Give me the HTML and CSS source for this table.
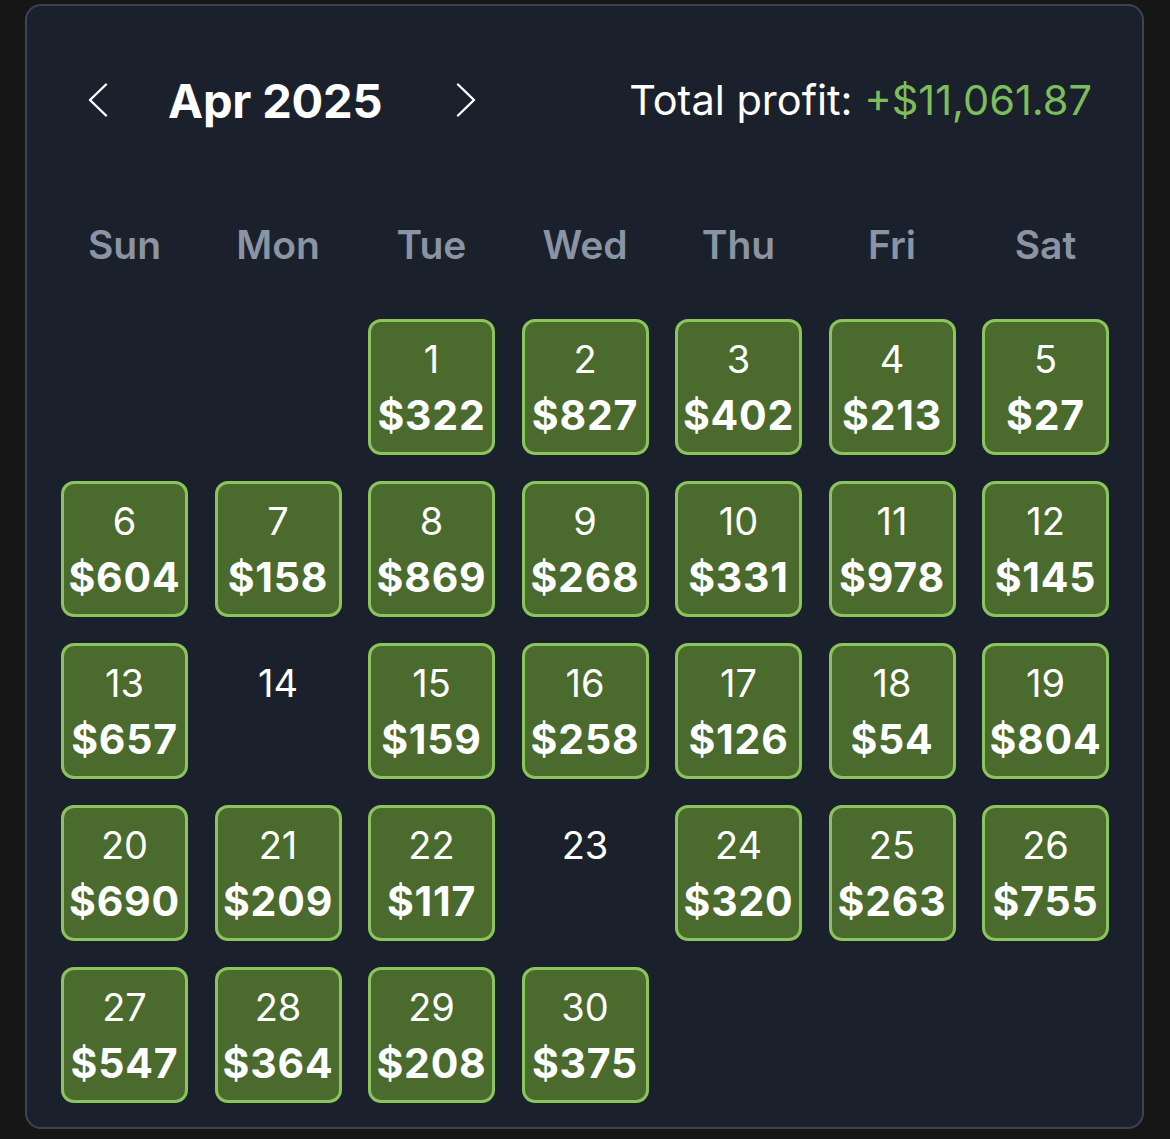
FILE: index.html
```html
<!DOCTYPE html>
<html lang="en">
<head>
<meta charset="utf-8">
<title>Profit calendar</title>
<link rel="stylesheet" href="styles.css">
</head>
<body>
<div class="card">
  <div class="header">
    <div class="nav">
      <svg class="chev chev-left" viewBox="0 0 20 34" width="20" height="34"><path d="M18 1.5 L2 17 L18 32.5" fill="none" stroke="#ffffff" stroke-width="2.4" stroke-linecap="round" stroke-linejoin="round"/></svg>
      <span class="month">Apr 2025</span>
      <svg class="chev chev-right" viewBox="0 0 20 34" width="20" height="34"><path d="M2 1.5 L18 17 L2 32.5" fill="none" stroke="#ffffff" stroke-width="2.4" stroke-linecap="round" stroke-linejoin="round"/></svg>
    </div>
    <div class="total">Total profit: <span class="pos">+$11,061.87</span></div>
  </div>
  <div class="weekdays">
    <div>Sun</div><div>Mon</div><div>Tue</div><div>Wed</div><div>Thu</div><div>Fri</div><div>Sat</div>
  </div>
  <div class="grid">
    <div class="cell empty"></div>
    <div class="cell empty"></div>
    <div class="cell win"><span class="d">1</span><span class="a">$322</span></div>
    <div class="cell win"><span class="d">2</span><span class="a">$827</span></div>
    <div class="cell win"><span class="d">3</span><span class="a">$402</span></div>
    <div class="cell win"><span class="d">4</span><span class="a">$213</span></div>
    <div class="cell win"><span class="d">5</span><span class="a">$27</span></div>

    <div class="cell win"><span class="d">6</span><span class="a">$604</span></div>
    <div class="cell win"><span class="d">7</span><span class="a">$158</span></div>
    <div class="cell win"><span class="d">8</span><span class="a">$869</span></div>
    <div class="cell win"><span class="d">9</span><span class="a">$268</span></div>
    <div class="cell win"><span class="d">10</span><span class="a">$331</span></div>
    <div class="cell win"><span class="d">11</span><span class="a">$978</span></div>
    <div class="cell win"><span class="d">12</span><span class="a">$145</span></div>

    <div class="cell win"><span class="d">13</span><span class="a">$657</span></div>
    <div class="cell"><span class="d">14</span></div>
    <div class="cell win"><span class="d">15</span><span class="a">$159</span></div>
    <div class="cell win"><span class="d">16</span><span class="a">$258</span></div>
    <div class="cell win"><span class="d">17</span><span class="a">$126</span></div>
    <div class="cell win"><span class="d">18</span><span class="a">$54</span></div>
    <div class="cell win"><span class="d">19</span><span class="a">$804</span></div>

    <div class="cell win"><span class="d">20</span><span class="a">$690</span></div>
    <div class="cell win"><span class="d">21</span><span class="a">$209</span></div>
    <div class="cell win"><span class="d">22</span><span class="a">$117</span></div>
    <div class="cell"><span class="d">23</span></div>
    <div class="cell win"><span class="d">24</span><span class="a">$320</span></div>
    <div class="cell win"><span class="d">25</span><span class="a">$263</span></div>
    <div class="cell win"><span class="d">26</span><span class="a">$755</span></div>

    <div class="cell win"><span class="d">27</span><span class="a">$547</span></div>
    <div class="cell win"><span class="d">28</span><span class="a">$364</span></div>
    <div class="cell win"><span class="d">29</span><span class="a">$208</span></div>
    <div class="cell win"><span class="d">30</span><span class="a">$375</span></div>
  </div>
</div>
</body>
</html>
```
FILE: styles.css
```css
* { box-sizing: border-box; }
html, body { margin: 0; padding: 0; }
body {
  background: #161616;
  font-family: Inter, "Noto Sans", "Liberation Sans", sans-serif;
  color: #ffffff;
  padding: 4px 26px 0 25px;
  height: 1139px;
  overflow: hidden;
}
.card {
  width: 1119px;
  height: 1125px;
  background: #1a212d;
  border: 2px solid #3c4453;
  border-radius: 16px;
  padding: 64px 33px 0 34px;
}
.header {
  height: 60px;
  display: flex;
  align-items: center;
  justify-content: space-between;
}
.nav {
  display: flex;
  align-items: center;
}
.chev { display: block; }
.chev-left { margin-left: 27px; }
.month {
  font-size: 47px;
  font-weight: 700;
  letter-spacing: -0.2px;
  margin-left: 60px;
  margin-right: 74px;
}
.total {
  font-size: 41.5px;
  font-weight: 400;
  padding-right: 17px;
  letter-spacing: 0;
}
.pos { color: #7dbd5b; }
.weekdays {
  margin-top: 84px;
  height: 60px;
  display: grid;
  grid-template-columns: repeat(7, 1fr);
  column-gap: 26.5px;
  align-items: center;
  text-align: center;
  font-size: 39px;
  font-weight: 600;
  color: #8a94a3;
}
.grid {
  margin-top: 45px;
  display: grid;
  grid-template-columns: repeat(7, 1fr);
  grid-auto-rows: 136px;
  column-gap: 26.5px;
  row-gap: 26px;
}
.cell {
  display: flex;
  flex-direction: column;
  align-items: center;
  padding-top: 14px;
  border: 3px solid transparent;
  border-radius: 13px;
}
.cell.win {
  background: #4a6a2e;
  border-color: #8bc45b;
}
.d {
  font-size: 38px;
  font-weight: 400;
  line-height: 46px;
}
.a {
  margin-top: 9px;
  font-size: 41px;
  font-weight: 700;
  line-height: 48px;
  letter-spacing: 0.8px;
  white-space: nowrap;
}
```
